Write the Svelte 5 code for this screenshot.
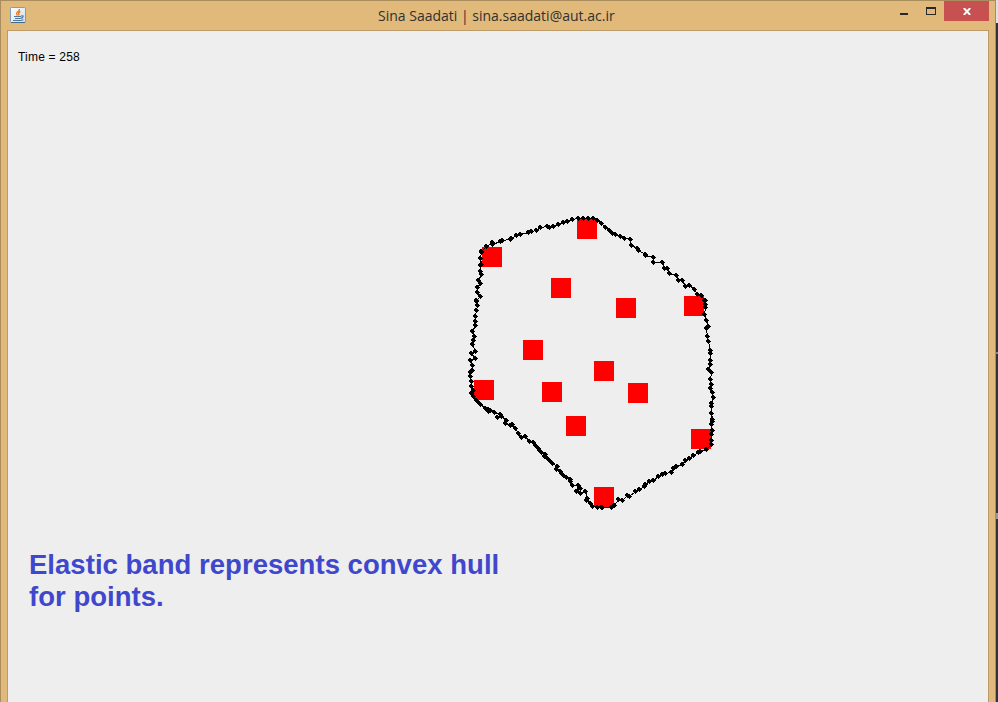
<script>
  const squares = [
    [577, 219], [482, 247], [551, 278], [616, 298], [684, 296], [523, 340], [474, 380],
    [542, 382], [594, 361], [628, 383], [566, 416], [691, 429], [594, 487],
  ];

  // Band nodes are stored per section, in thirds of a pixel from the section origin.
  const sections = [
    [580, 205, '9,39 24,39 39,39 51,47 63,54 75,66 87,75 96,84 105,87 120,93 132,101 150,104 153,120 171,129 175,135 195,147 195,150 219,158 219,171 246,171 252,189 261,191 267,204 288,210 294,225 306,225 315,243 327,240 342,252 351,267 363,270 372,285'],
    [640, 300, '195,0 195,12 195,22 192,42 198,60 204,78 198,84 201,108 204,125 210,150 210,161 210,180 210,192 204,207 213,216 210,237 213,252 210,264 216,276 219,291 213,309 213,318 213,339 216,357 216,363 213,372 216,390 213,402 213,420 213,432 198,447'],
    [560, 430, '420,63 416,66 399,75 387,84 375,90 366,102 348,108 339,114 333,126 315,129 306,134 294,138 279,150 269,153 257,162 252,168 239,177 225,183 207,198 201,195 186,210 174,207 162,227 155,231 127,231 123,231 111,231 98,228 92,219 78,210 83,204 75,183 62,189 62,174 48,183 54,165'],
    [460, 390, '336,285 332,275 330,267 320,263 311,257 303,249 302,243 288,237 291,228 276,219 268,210 261,206 252,200 255,192 243,188 237,181 234,174 225,165 219,156 207,153 195,138 183,141 175,129 165,114 156,102 150,105 135,99 138,90 125,80 111,81 120,72 104,66 90,60 84,63 84,57 75,54 60,42 54,36 48,30'],
    [460, 300, '39,289 34,280 39,270 33,260 33,243 30,230 30,218 36,210 36,195 30,180 45,174 33,159 45,153 36,132 39,120 42,108 36,93 45,75 45,65 45,50 48,30 51,15 48,3'],
    [460, 205, '48,285 60,273 51,261 51,246 60,234 54,225 63,207 60,198 60,182 63,177 60,161 63,142 63,138 78,123 96,111 98,117 120,110 126,105 150,102 155,99 168,90 180,87 204,81 214,78 228,75 242,67 261,63 267,66 281,63 296,57 311,51 323,48 338,44 354,39 369,39'],
  ];

  const nodes = sections.flatMap(([ox, oy, list]) =>
    list.split(' ').map((pair) => {
      const [x, y] = pair.split(',').map(Number);
      return [ox + Math.floor(x / 3), oy + Math.floor(y / 3)];
    })
  );
  const band = nodes.map(([x, y]) => `${x},${y}`).join(' ');
</script>

<div class="desktop">
  <div class="window">
    <header>
      <svg class="java" width="16" height="16" viewBox="0 0 16 16">
        <defs>
          <linearGradient id="tile" x2="1" y2="1">
            <stop offset="0" stop-color="#fff" />
            <stop offset="1" stop-color="#cbdce8" />
          </linearGradient>
        </defs>
        <rect x=".5" y=".5" width="15" height="15" rx="1" fill="url(#tile)" stroke="#7e9fb8" />
        <path d="M1 15.5h14" stroke="#416b8c" />
        <path d="M9.5 2Q9.5 4 7.5 5Q5.8 6.3 7.5 8.5M10.5 4.5Q7.7 5.8 9 7.2L8.5 8.5" fill="none" stroke="#ee7d20" stroke-width="1.4" />
        <path d="M4 9.5h7M5 11.5h5.5M3 13.5h8.5M11 9q2.5-.7 2 .7t-2.3 1.6M13.5 13h-2" fill="none" stroke="#50779a" stroke-width="1.2" />
      </svg>
      <h1>Sina Saadati | sina.saadati@aut.ac.ir</h1>
      <div class="controls">
        <svg width="56" height="20" viewBox="0 0 56 20" shape-rendering="crispEdges">
          <path d="M12 12h8v2h-8zM38 6h10v8H38zM39 8v5h8V8z" fill="#292929" fill-rule="evenodd" />
        </svg>
        <div class="close">
          <svg width="8" height="7" viewBox="0 0 8 7"><path d="M.8 0L7.2 7M7.2 0L.8 7" stroke="#fff" stroke-width="1.9" /></svg>
        </div>
      </div>
    </header>
    <main>
      <p class="time">Time = 258</p>
      <p class="caption">Elastic band represents convex hull<br />for points.</p>
      <svg class="plot" width="980" height="671" viewBox="8 31 980 671" shape-rendering="crispEdges">
        {#each squares as [x, y]}
          <rect {x} {y} width="20" height="20" fill="#f00" />
        {/each}
        <polygon points={band} transform="translate(.5 .5)" fill="none" stroke="#000" />
        {#each nodes as [x, y]}
          <path d="M{x - 1} {y - 2}h2v1h1v1h1v1h-1v1h-1v1h-1v-1h-1v-1h-1v-2h1z" />
        {/each}
      </svg>
    </main>
  </div>
  <aside></aside>
</div>

<style>
  .desktop {
    display: flex;
    width: 998px;
    height: 702px;
    overflow: hidden;
    background: #ddd;
  }
  .window {
    box-sizing: border-box;
    width: 996px;
    height: 702px;
    padding: 0 6px;
    border: 1px solid #a98d5e;
    border-bottom: 0;
    background: #e0b97b;
  }
  header {
    display: flex;
    height: 29px;
  }
  .java {
    margin: 6px 0 0 3px;
  }
  h1 {
    flex: 1;
    margin: 5px 0 0 352px;
    color: #303030;
    font: 400 14px/20px "Open Sans", "Noto Sans", sans-serif;
    white-space: nowrap;
  }
  .controls {
    display: flex;
    height: 20px;
  }
  .close {
    display: flex;
    width: 45px;
    height: 20px;
    align-items: center;
    justify-content: center;
    background: #c75050;
  }
  main {
    position: relative;
    box-sizing: border-box;
    width: 982px;
    height: 672px;
    border: 1px solid #bb9c69;
    border-bottom: 0;
    background: #eee;
  }
  .time {
    margin: 0;
    padding: 18px 0 0 10px;
    color: #000;
    font: 12px/16px "Liberation Sans", Arial, sans-serif;
    letter-spacing: 0.2px;
  }
  .caption {
    margin: 0;
    padding: 484px 0 0 21px;
    color: #3f48cc;
    font: 700 27.5px/32px "Liberation Sans", Arial, sans-serif;
    letter-spacing: 0.03px;
  }
  .plot {
    position: absolute;
    inset: 0;
  }
  aside {
    width: 2px;
    height: 702px;
    background: linear-gradient(#e0e1e5 0 23px, #303337 23px 352px, #888 352px 354px, #303337 354px 513px, #999 513px 519px, #303337 519px);
  }
</style>
